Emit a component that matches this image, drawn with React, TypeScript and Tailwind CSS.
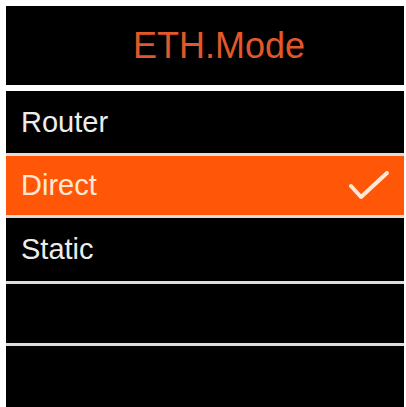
const items = [
  { label: 'Router', h: 'h-[62px]' },
  { label: 'Direct', h: 'h-[59px]', selected: true },
  { label: 'Static', h: 'h-[63px]' },
  { label: '', h: 'h-[59px]' },
  { label: '', h: 'h-[61px]' },
];

function Check() {
  return (
    <svg width="42" height="30" viewBox="0 0 42 30" className="mr-[14px]">
      <path
        d="M3 15 L13 26 L39 2"
        fill="none"
        stroke="#ffe9d6"
        strokeWidth="4"
        strokeLinecap="round"
        strokeLinejoin="round"
      />
    </svg>
  );
}

export default function App() {
  return (
    <div
      className="w-[406px] h-[407px] bg-white pt-[6px] pl-[6px] pr-[2px] overflow-hidden"
      style={{ fontFamily: '"Liberation Sans", Arial, sans-serif' }}
    >
      <div className="flex flex-col">
        <div className="h-[79px] bg-black flex items-center justify-center pl-[28px]">
          <span className="text-[36px] leading-none text-[#e2582a]">ETH.Mode</span>
        </div>
        <div className="h-[6px] bg-white" />
        {items.map((item, i) => (
          <div key={i} className="flex flex-col">
            {i > 0 && <div className="h-[3px] bg-[#dcdcdc]" />}
            <div
              className={`${item.h} flex items-center justify-between pl-[15px] ${
                item.selected ? 'bg-[#ff5608] text-[#ffe9d6]' : 'bg-black text-[#ececec]'
              }`}
            >
              <span className="text-[29px] leading-none">{item.label}</span>
              {item.selected && <Check />}
            </div>
          </div>
        ))}
      </div>
    </div>
  );
}
